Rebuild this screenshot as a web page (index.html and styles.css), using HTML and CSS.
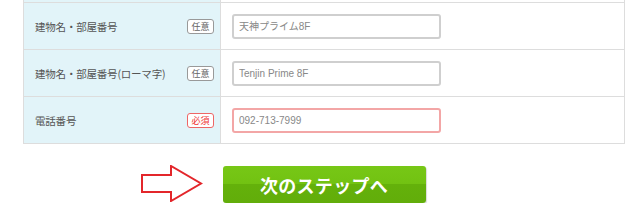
FILE: index.html
```html
<!DOCTYPE html>
<html lang="ja">
<head>
    <meta charset="UTF-8">
    <meta name="viewport" content="width=device-width, initial-scale=1.0">
    <title>お届け先情報の入力</title>
    <link rel="stylesheet" href="styles.css">
</head>
<body>
    <div class="form-table">
        <!-- tail of the previous row -->
        <div class="row row-cut">
            <div class="label-cell"></div>
            <div class="field-cell"></div>
        </div>

        <div class="row">
            <div class="label-cell">
                <label for="building">建物名・部屋番号</label>
                <span class="badge">任意</span>
            </div>
            <div class="field-cell">
                <input type="text" id="building" class="text-input" placeholder="天神プライム8F">
            </div>
        </div>

        <div class="row">
            <div class="label-cell">
                <label for="buildingRoma">建物名・部屋番号(ローマ字)</label>
                <span class="badge">任意</span>
            </div>
            <div class="field-cell">
                <input type="text" id="buildingRoma" class="text-input" placeholder="Tenjin Prime 8F">
            </div>
        </div>

        <div class="row">
            <div class="label-cell">
                <label for="tel">電話番号</label>
                <span class="badge badge-required">必須</span>
            </div>
            <div class="field-cell">
                <input type="text" id="tel" class="text-input input-required" placeholder="092-713-7999">
            </div>
        </div>
    </div>

    <div class="actions">
        <svg class="arrow" width="62" height="37" viewBox="0 0 62 37">
            <path d="M1 10 H30 V1 L60 18.5 L30 36 V27 H1 Z" fill="#fff" stroke="#e3262b" stroke-width="2" stroke-linejoin="miter"/>
        </svg>
        <button class="next-btn" type="button">次のステップへ</button>
        <span></span>
    </div>
</body>
</html>
```

FILE: styles.css
```css
body {
    margin: 0;
    background: #fff;
    font-family: "Noto Sans CJK JP", "Liberation Sans", sans-serif;
    color: #555;
}
.form-table {
    width: 600px;
    margin-left: 23px;
    border-left: 1px solid #ddd;
    border-right: 1px solid #ddd;
}
.row {
    display: grid;
    grid-template-columns: 197px 1fr;
    height: 46px;
    border-bottom: 1px solid #ddd;
}
.row-cut {
    height: 2px;
}
.label-cell {
    display: flex;
    align-items: center;
    justify-content: space-between;
    padding: 0 6px 0 11px;
    background: #e2f4f9;
    border-right: 1px solid #ddd;
    font-size: 10.5px;
}
.label-cell label {
    letter-spacing: -0.2px;
}
.badge {
    display: inline-block;
    width: 25px;
    height: 13px;
    line-height: 13px;
    text-align: center;
    font-size: 9px;
    color: #666;
    background: #fff;
    border: 1px solid #999;
    border-radius: 3px;
}
.badge-required {
    color: #e33;
    border-color: #e66;
}
.field-cell {
    display: flex;
    align-items: center;
    padding-left: 11px;
}
.text-input {
    box-sizing: border-box;
    width: 209px;
    height: 25px;
    padding: 0 5px;
    border: 2px solid #cfcfcf;
    border-radius: 3px;
    font-family: "Liberation Sans", "Noto Sans CJK JP", sans-serif;
    font-size: 10px;
    color: #888;
    outline: none;
}
.text-input::placeholder {
    color: #888;
}
.input-required {
    border-color: #f3a6a6;
}
.actions {
    display: grid;
    grid-template-columns: 1fr auto 1fr;
    align-items: center;
    column-gap: 20px;
    width: 602px;
    margin: 22px 0 0 23px;
}
.arrow {
    justify-self: end;
    display: block;
    margin-top: -3px;
}
.next-btn {
    width: 203px;
    height: 37px;
    border: 0;
    border-radius: 3px;
    background: linear-gradient(to bottom, #77c716 0%, #72c212 50%, #64b10b 50%, #62ad0a 100%);
    box-shadow: 1px 1px 1px rgba(0, 0, 0, 0.15);
    color: #fff;
    font-family: "Noto Sans CJK JP", sans-serif;
    font-size: 18px;
    font-weight: bold;
    letter-spacing: 0.3px;
    cursor: pointer;
}
```
